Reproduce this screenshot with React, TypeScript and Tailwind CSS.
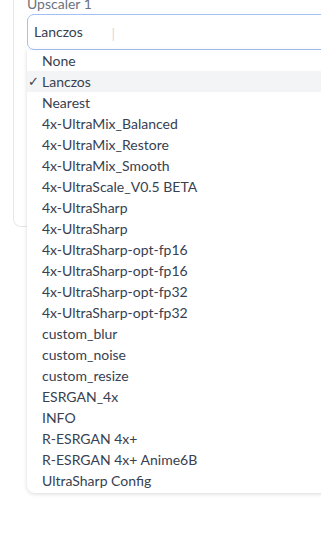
import React from 'react';

const options = [
  'None',
  'Lanczos',
  'Nearest',
  '4x-UltraMix_Balanced',
  '4x-UltraMix_Restore',
  '4x-UltraMix_Smooth',
  '4x-UltraScale_V0.5 BETA',
  '4x-UltraSharp',
  '4x-UltraSharp',
  '4x-UltraSharp-opt-fp16',
  '4x-UltraSharp-opt-fp16',
  '4x-UltraSharp-opt-fp32',
  '4x-UltraSharp-opt-fp32',
  'custom_blur',
  'custom_noise',
  'custom_resize',
  'ESRGAN_4x',
  'INFO',
  'R-ESRGAN 4x+',
  'R-ESRGAN 4x+ Anime6B',
  'UltraSharp Config',
];

const App: React.FC = () => {
  const selected = 'Lanczos';

  return (
    <div
      className="relative w-[321px] h-[549px] bg-white overflow-hidden text-[#374151]"
      style={{ fontFamily: 'Lato, "Open Sans", sans-serif' }}
    >
      {/* Accordion panel behind the dropdown */}
      <div className="ml-[13px] -mt-[5px] h-[232px] border-l border-b border-[#e5e7eb] rounded-bl-[8px] pl-[13px] flex flex-col">
        <div className="text-[14px] leading-[18px] text-[#6b7280]">Upscaler 1</div>
        <div className="mt-[1px] h-[36px] w-[320px] rounded-[7px] border border-[#a3bff3] bg-white flex items-center pl-[6px] text-[14px]">
          <span className="w-[77px] -mt-[1px]">Lanczos</span>
          <span className="text-[17px] leading-none text-[#d4d4d8] font-light pt-[4px]">I</span>
        </div>

        {/* bits of the hidden controls peeking out left of the list */}
        <div className="flex flex-col gap-[23px] pt-[69px]">
          <span className="w-[2px] h-[4px] bg-[#fbbf24]" />
          <span className="w-[2px] h-[4px] bg-[#93c5fd]" />
          <span className="w-[2px] h-[4px] bg-[#fbbf24]" />
          <span className="w-[2px] h-[4px] bg-[#93c5fd]" />
        </div>
      </div>

      {/* Open dropdown list */}
      <ul className="absolute left-[27px] top-[50px] w-[320px] bg-white rounded-b-[8px] shadow-[0_1px_4px_rgba(0,0,0,0.15)] pb-[2px]">
        {options.map((opt, i) => (
          <li
            key={i}
            className={`h-[21px] flex items-center text-[14px] ${opt === selected ? 'bg-[#f3f4f6]' : ''}`}
          >
            <span className="w-[15px] pl-[1px] text-[13px]">{opt === selected ? '✓' : ''}</span>
            {opt}
          </li>
        ))}
      </ul>
    </div>
  );
};

export default App;
